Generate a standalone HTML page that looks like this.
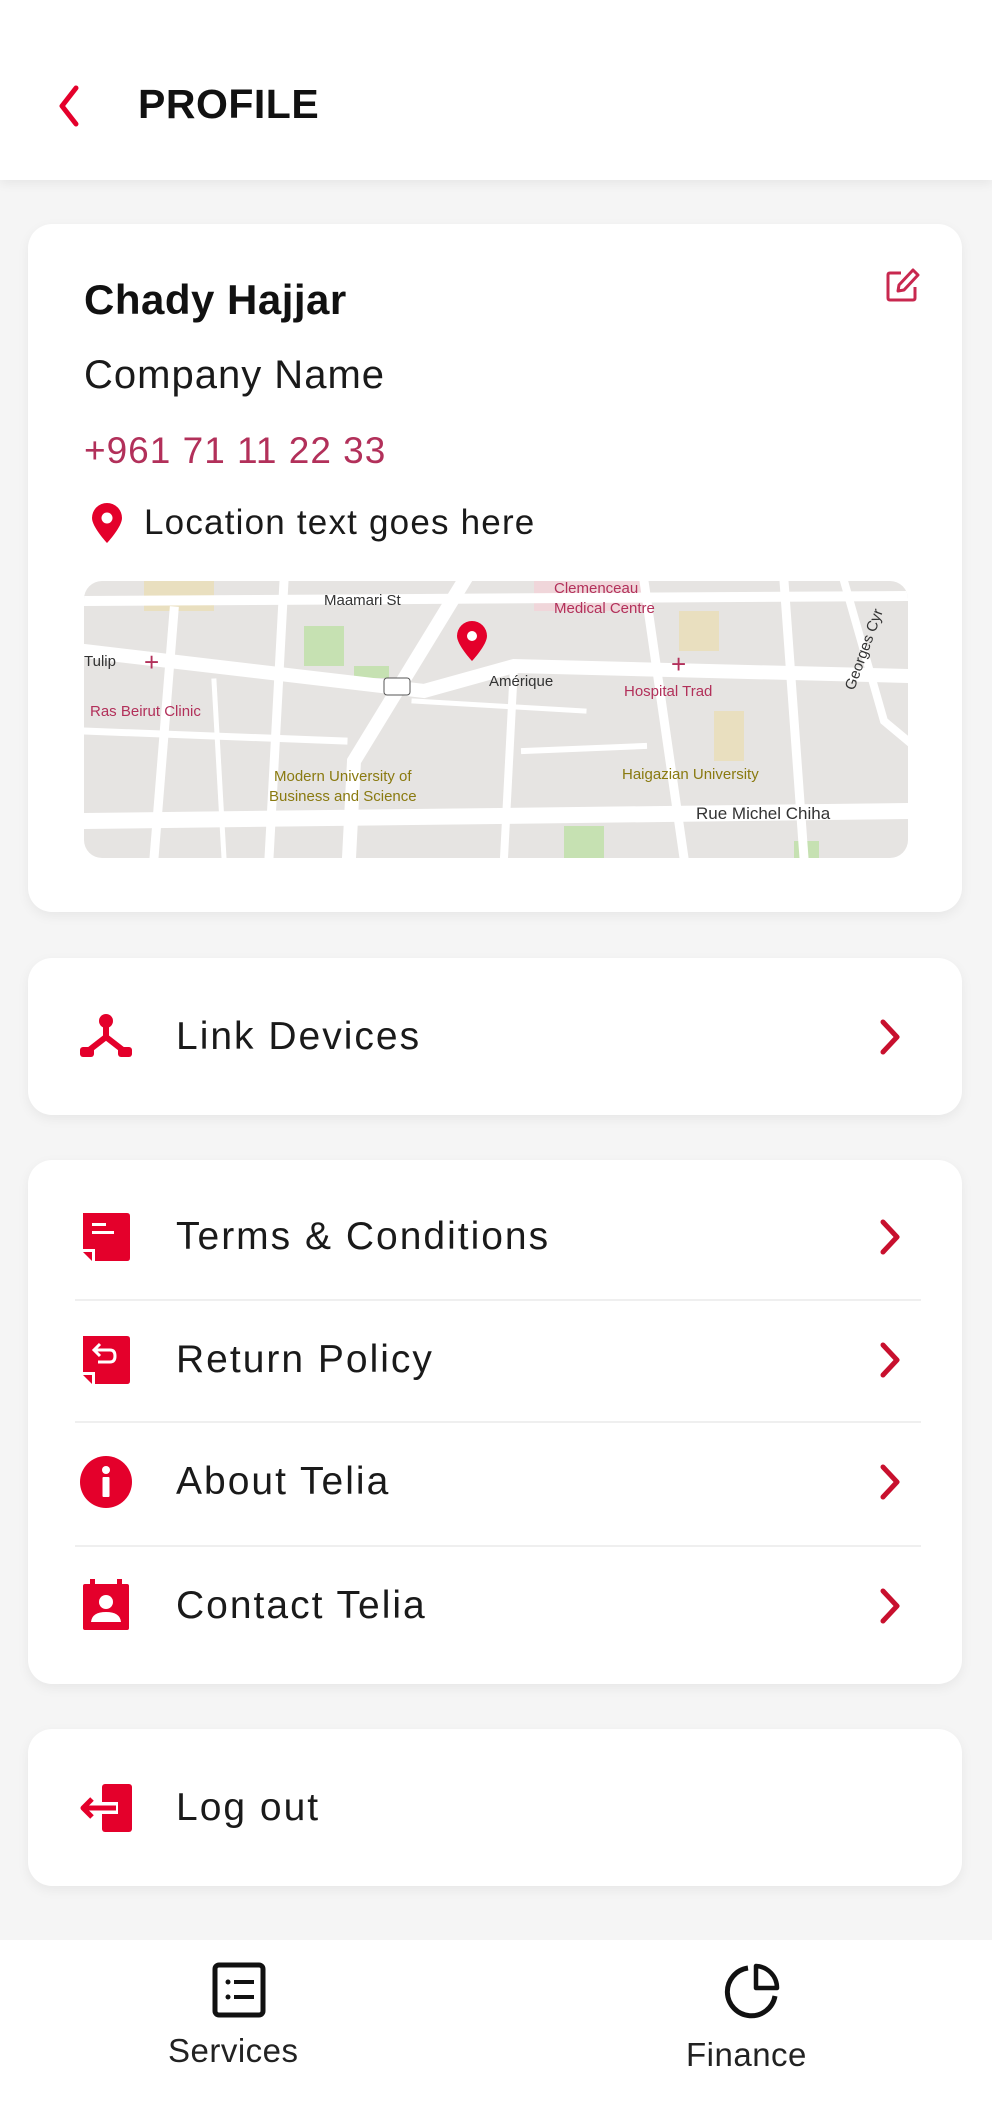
<!DOCTYPE html>
<html><head><meta charset="utf-8"><style>
*{margin:0;padding:0;box-sizing:border-box}
body{width:992px;height:2124px;background:#f5f5f5;font-family:"Liberation Sans",sans-serif;position:relative;overflow:hidden;color:#111}
.abs{position:absolute}
.header{left:0;top:0;width:992px;height:180px;background:#fff;box-shadow:0 4px 10px rgba(0,0,0,.06)}
.card{position:absolute;left:28px;width:934px;background:#fff;border-radius:24px;box-shadow:0 4px 12px rgba(0,0,0,.06)}
.t{position:absolute;white-space:nowrap;line-height:1}
.row{position:absolute;left:0;width:934px;height:80px}
.row .lbl{position:absolute;left:148px;top:50%;transform:translateY(-50%);font-size:39px;color:#1a1a1a;letter-spacing:2px}
.row .ic{position:absolute;left:50px;top:50%;transform:translateY(-50%);width:56px;height:56px}
.row .chev{position:absolute;left:846px;top:50%;transform:translateY(-50%);width:32px;height:40px}
.div{position:absolute;left:47px;width:846px;height:2px;background:#efefef}
.nav{left:0;top:1940px;width:992px;height:184px;background:#fff}
</style></head><body>
<div class="abs header">
<svg class="abs" style="left:52px;top:84px" width="34" height="44" viewBox="0 0 34 44"><path d="M24 4 L10 22 L24 40" stroke="#e4002b" stroke-width="5" fill="none" stroke-linecap="round" stroke-linejoin="round"/></svg>
<div class="t" style="left:138px;top:84px;font-size:41px;font-weight:bold;letter-spacing:.5px">PROFILE</div>
</div>

<div class="card" style="top:224px;height:688px">
<div class="t" style="left:56px;top:55px;font-size:42px;font-weight:bold;letter-spacing:.5px">Chady Hajjar</div>
<svg class="abs" style="left:857px;top:43px" width="36" height="36" viewBox="0 0 36 36"><path d="M16 6 H5 Q3 6 3 8 V31 Q3 33 5 33 H28 Q30 33 30 31 V20" stroke="#c8284f" stroke-width="3" fill="none"/><path d="M13 24 L14 18 L28 3 L33 8 L19 23 Z" stroke="#c8284f" stroke-width="3" fill="none" stroke-linejoin="round"/></svg>
<div class="t" style="left:56px;top:131px;font-size:40px;color:#1a1a1a;letter-spacing:1px">Company Name</div>
<div class="t" style="left:56px;top:208px;font-size:37px;color:#b2305a;letter-spacing:1px">+961 71 11 22 33</div>
<svg class="abs" style="left:61px;top:278px" width="36" height="42" viewBox="0 0 36 42"><path d="M18 41 C18 41 3 25 3 16 A15 15 0 0 1 33 16 C33 25 18 41 18 41Z" fill="#e4002b"/><circle cx="18" cy="16" r="5.5" fill="#fff"/></svg>
<div class="t" style="left:116px;top:281px;font-size:35px;color:#1a1a1a;letter-spacing:1.2px">Location text goes here</div>
<svg class="abs" style="left:56px;top:357px;border-radius:18px" width="824" height="277" viewBox="0 0 824 277">
<rect width="824" height="277" fill="#e6e4e2"/>
<rect x="60" y="0" width="70" height="30" fill="#e9dfbf"/>
<rect x="450" y="0" width="110" height="30" fill="#f0d6da"/>
<rect x="595" y="30" width="40" height="40" fill="#e9dfbf"/>
<rect x="630" y="130" width="30" height="50" fill="#e9dfbf"/>
<rect x="220" y="45" width="40" height="40" fill="#c6e1b2"/>
<rect x="270" y="85" width="35" height="12" fill="#c6e1b2"/>
<rect x="480" y="245" width="40" height="32" fill="#c6e1b2"/>
<rect x="710" y="260" width="25" height="17" fill="#c6e1b2"/>
<g stroke="#fff" fill="none" stroke-linecap="square">
<path d="M0 70 L340 110 L430 85 L824 95" stroke-width="14"/>
<path d="M0 240 L824 230" stroke-width="16"/>
<path d="M0 20 L824 15" stroke-width="10"/>
<path d="M380 0 L270 180 L265 277" stroke-width="14"/>
<path d="M200 0 L185 277" stroke-width="9"/>
<path d="M90 30 L70 277" stroke-width="9"/>
<path d="M560 0 L600 277" stroke-width="9"/>
<path d="M700 0 L720 277" stroke-width="9"/>
<path d="M430 85 L420 277" stroke-width="8"/>
<path d="M0 150 L260 160" stroke-width="7"/>
<path d="M440 170 L560 165" stroke-width="6"/>
<path d="M760 0 L800 140 L824 160" stroke-width="8"/>
<path d="M130 100 L140 277" stroke-width="5"/>
<path d="M330 120 L500 130" stroke-width="5"/>
</g>
<g font-family="Liberation Sans,sans-serif" font-size="15">
<text x="240" y="24" fill="#333">Maamari St</text>
<text x="470" y="12" fill="#b2305a">Clemenceau</text>
<text x="470" y="32" fill="#b2305a">Medical Centre</text>
<text x="0" y="85" fill="#333">Tulip</text>
<text x="6" y="135" fill="#b2305a">Ras Beirut Clinic</text>
<text x="405" y="105" fill="#333">Amérique</text>
<text x="540" y="115" fill="#b2305a">Hospital Trad</text>
<text x="190" y="200" fill="#8a7a10">Modern University of</text>
<text x="185" y="220" fill="#8a7a10">Business and Science</text>
<text x="538" y="198" fill="#8a7a10">Haigazian University</text>
<text x="612" y="238" fill="#333" font-size="17">Rue Michel Chiha</text>
<text x="770" y="110" fill="#333" transform="rotate(-70 770 110)">Georges Cyr</text>
<text x="60" y="90" fill="#b2305a" font-size="26">+</text>
<text x="587" y="92" fill="#b2305a" font-size="26">+</text>
</g>
<rect x="300" y="97" width="26" height="17" rx="3" fill="#fff" stroke="#555"/>
<path d="M388 80 C388 80 373 64 373 55 A15 15 0 0 1 403 55 C403 64 388 80 388 80Z" fill="#e4002b"/><circle cx="388" cy="55" r="5" fill="#fff"/>
</svg>
</div>

<div class="card" style="top:958px;height:157px">
<div class="row" style="top:39px">
<svg class="ic" viewBox="0 0 56 56"><circle cx="28" cy="12" r="7" fill="#e4002b"/><path d="M28 14 V28 L10 42 M28 28 L46 42" stroke="#e4002b" stroke-width="6" fill="none"/><rect x="2" y="38" width="14" height="10" rx="3" fill="#e4002b"/><rect x="40" y="38" width="14" height="10" rx="3" fill="#e4002b"/></svg>
<div class="lbl">Link Devices</div>
<svg class="chev" viewBox="0 0 32 40"><path d="M9 5 L23 20 L9 35" stroke="#c8102e" stroke-width="5" fill="none" stroke-linecap="round" stroke-linejoin="round"/></svg>
</div></div>

<div class="card" style="top:1160px;height:524px">
<div class="row" style="top:37px">
<svg class="ic" viewBox="0 0 56 56"><path d="M5 4 H49 Q52 4 52 7 V49 Q52 52 49 52 H17 V40 H5 Z" fill="#e4002b"/><path d="M5 43 L14 43 L14 52 Z" fill="#e4002b"/><rect x="14" y="14" width="14" height="3" fill="#fff"/><rect x="14" y="22" width="22" height="3" fill="#fff"/></svg>
<div class="lbl">Terms &amp; Conditions</div>
<svg class="chev" viewBox="0 0 32 40"><path d="M9 5 L23 20 L9 35" stroke="#c8102e" stroke-width="5" fill="none" stroke-linecap="round" stroke-linejoin="round"/></svg>
</div>
<div class="div" style="top:139px"></div>
<div class="row" style="top:160px">
<svg class="ic" viewBox="0 0 56 56"><path d="M5 4 H49 Q52 4 52 7 V49 Q52 52 49 52 H17 V40 H5 Z" fill="#e4002b"/><path d="M5 43 L14 43 L14 52 Z" fill="#e4002b"/><path d="M22 12 L16 18 L22 24 M16 18 H32 Q37 18 37 24 Q37 30 32 30 H20" stroke="#fff" stroke-width="3" fill="none"/></svg>
<div class="lbl">Return Policy</div>
<svg class="chev" viewBox="0 0 32 40"><path d="M9 5 L23 20 L9 35" stroke="#c8102e" stroke-width="5" fill="none" stroke-linecap="round" stroke-linejoin="round"/></svg>
</div>
<div class="div" style="top:261px"></div>
<div class="row" style="top:282px">
<svg class="ic" viewBox="0 0 56 56"><circle cx="28" cy="28" r="26" fill="#e4002b"/><circle cx="28" cy="16" r="4" fill="#fff"/><rect x="24.5" y="23" width="7" height="20" rx="1" fill="#fff"/></svg>
<div class="lbl">About Telia</div>
<svg class="chev" viewBox="0 0 32 40"><path d="M9 5 L23 20 L9 35" stroke="#c8102e" stroke-width="5" fill="none" stroke-linecap="round" stroke-linejoin="round"/></svg>
</div>
<div class="div" style="top:385px"></div>
<div class="row" style="top:406px">
<svg class="ic" viewBox="0 0 56 56"><rect x="5" y="6" width="46" height="46" rx="2" fill="#e4002b"/><rect x="12" y="1" width="5" height="8" fill="#e4002b"/><rect x="39" y="1" width="5" height="8" fill="#e4002b"/><circle cx="28" cy="24" r="7" fill="#fff"/><path d="M13 44 Q14 34 28 34 Q42 34 43 44 Z" fill="#fff"/></svg>
<div class="lbl">Contact Telia</div>
<svg class="chev" viewBox="0 0 32 40"><path d="M9 5 L23 20 L9 35" stroke="#c8102e" stroke-width="5" fill="none" stroke-linecap="round" stroke-linejoin="round"/></svg>
</div>
</div>

<div class="card" style="top:1729px;height:157px">
<div class="row" style="top:39px">
<svg class="ic" viewBox="0 0 56 56"><rect x="24" y="4" width="30" height="48" rx="3" fill="#e4002b"/><rect x="14" y="22" width="26" height="12" fill="#fff"/><path d="M6 28 H38" stroke="#e4002b" stroke-width="5"/><path d="M14 19 L5 28 L14 37" stroke="#e4002b" stroke-width="5" fill="none" stroke-linejoin="round"/></svg>
<div class="lbl">Log out</div>
</div></div>

<div class="abs nav">
<svg class="abs" style="left:212px;top:22px" width="54" height="56" viewBox="0 0 54 56"><rect x="3" y="3" width="48" height="50" rx="4" stroke="#111" stroke-width="5" fill="none"/><circle cx="16" cy="20" r="2.5" fill="#111"/><circle cx="16" cy="35" r="2.5" fill="#111"/><rect x="22" y="18" width="20" height="4" fill="#111"/><rect x="22" y="33" width="20" height="4" fill="#111"/></svg>
<div class="t" style="left:168px;top:94px;font-size:33px;color:#222;letter-spacing:.5px">Services</div>
<svg class="abs" style="left:724px;top:22px" width="58" height="58" viewBox="0 0 58 58"><path d="M24 6 A24 24 0 1 0 51 34" stroke="#111" stroke-width="5" fill="none"/><path d="M32 4 A22 22 0 0 1 53 26 H32 Z" stroke="#111" stroke-width="4.5" fill="none" stroke-linejoin="round"/></svg>
<div class="t" style="left:686px;top:98px;font-size:33px;color:#222;letter-spacing:.5px">Finance</div>
</div>
</body></html>
